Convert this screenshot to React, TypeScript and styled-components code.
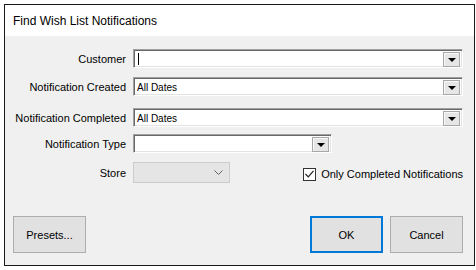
import styled, { createGlobalStyle } from 'styled-components';

const GlobalStyle = createGlobalStyle`
	html, body {
		margin: 0;
		padding: 0;
		background: #ffffff;
	}
	body {
		font-family: 'Liberation Sans', Arial, sans-serif;
		font-size: 11px;
		color: #000;
	}
`;

const Window = styled.div`
	box-sizing: border-box;
	width: 471px;
	height: 262px;
	margin: 4px 0 0 4px;
	border: 1px solid #1a1a1a;
	display: flex;
	flex-direction: column;
	background: #f0f0f0;
`;

const TitleBar = styled.div`
	flex: none;
	height: 31px;
	background: #ffffff;
	display: flex;
	align-items: center;
	padding-left: 8px;
	font-size: 12px;
`;

const Body = styled.div`
	flex: 1;
	display: flex;
	flex-direction: column;
	padding: 13px 11px 12px 0;
`;

const Row = styled.div<{ $space: number }>`
	display: grid;
	grid-template-columns: 121px 1fr;
	column-gap: 7px;
	align-items: center;
	margin-top: ${(props) => props.$space}px;
`;

const Label = styled.label`
	text-align: right;
	white-space: nowrap;
`;

const Combo = styled.div<{ $width?: number }>`
	box-sizing: border-box;
	height: 19px;
	width: ${(props) => (props.$width ? `${props.$width}px` : '100%')};
	background: #ffffff;
	border-top: 1px solid #a0a0a0;
	border-left: 1px solid #a0a0a0;
	border-right: 1px solid #ffffff;
	border-bottom: 1px solid #ffffff;
	box-shadow: inset 1px 1px 0 #696969, inset -1px -1px 0 #e3e3e3;
	display: flex;
	align-items: center;
	padding: 2px 2px 1px 3px;
	font-size: 10px;
`;

const Caret = styled.span`
	width: 1px;
	height: 12px;
	background: #000;
	margin-left: 1px;
`;

const ComboButton = styled.div`
	box-sizing: border-box;
	width: 17px;
	height: 15px;
	margin-left: auto;
	background: #e6e6e6;
	border: 1px solid #a8a8a8;
	box-shadow: inset 1px 1px 0 #f8f8f8;
	display: flex;
	align-items: center;
	justify-content: center;
	&::after {
		content: '';
		border-left: 4px solid transparent;
		border-right: 4px solid transparent;
		border-top: 4px solid #000;
		margin-top: 1px;
	}
`;

const StoreCell = styled.div`
	display: flex;
	align-items: center;
`;

const FlatCombo = styled.div`
	box-sizing: border-box;
	width: 97px;
	height: 21px;
	background: #e5e5e5;
	border: 1px solid #cccccc;
	display: flex;
	align-items: center;
	justify-content: flex-end;
	padding-right: 6px;
`;

const CheckOption = styled.label`
	margin-left: auto;
	margin-top: 3px;
	display: flex;
	align-items: center;
	gap: 5px;
	white-space: nowrap;
`;

const CheckBox = styled.span`
	box-sizing: border-box;
	width: 13px;
	height: 13px;
	background: #ffffff;
	border: 1px solid #333333;
	display: flex;
	align-items: center;
	justify-content: center;
`;

const Buttons = styled.div`
	margin-top: auto;
	display: flex;
	gap: 7px;
	padding-left: 8px;
`;

const Button = styled.button<{ $default?: boolean; $push?: boolean }>`
	box-sizing: border-box;
	width: 73px;
	height: 37px;
	padding: 0;
	background: #e1e1e1;
	border: ${(props) => (props.$default ? '2px solid #0078d7' : '1px solid #adadad')};
	margin-left: ${(props) => (props.$push ? 'auto' : '0')};
	font-family: inherit;
	font-size: 11px;
	color: #000;
`;

function App() {
	return (
		<>
			<GlobalStyle />
			<Window>
				<TitleBar>Find Wish List Notifications</TitleBar>
				<Body>
					<Row $space={0}>
						<Label>Customer</Label>
						<Combo>
							<Caret />
							<ComboButton />
						</Combo>
					</Row>
					<Row $space={9}>
						<Label>Notification Created</Label>
						<Combo>
							All Dates
							<ComboButton />
						</Combo>
					</Row>
					<Row $space={12}>
						<Label>Notification Completed</Label>
						<Combo>
							All Dates
							<ComboButton />
						</Combo>
					</Row>
					<Row $space={7}>
						<Label>Notification Type</Label>
						<Combo $width={199}>
							<ComboButton />
						</Combo>
					</Row>
					<Row $space={9}>
						<Label>Store</Label>
						<StoreCell>
							<FlatCombo>
								<svg width='9' height='5' viewBox='0 0 9 5'>
									<polyline points='0.5,0.5 4.5,4.5 8.5,0.5' fill='none' stroke='#606060' strokeWidth='1' />
								</svg>
							</FlatCombo>
							<CheckOption>
								<CheckBox>
									<svg width='9' height='8' viewBox='0 0 9 8'>
										<polyline points='0.5,4 3.3,6.8 8.5,0.8' fill='none' stroke='#222' strokeWidth='1.2' />
									</svg>
								</CheckBox>
								Only Completed Notifications
							</CheckOption>
						</StoreCell>
					</Row>
					<Buttons>
						<Button>Presets...</Button>
						<Button $default $push>
							OK
						</Button>
						<Button>Cancel</Button>
					</Buttons>
				</Body>
			</Window>
		</>
	);
}

export default App;
